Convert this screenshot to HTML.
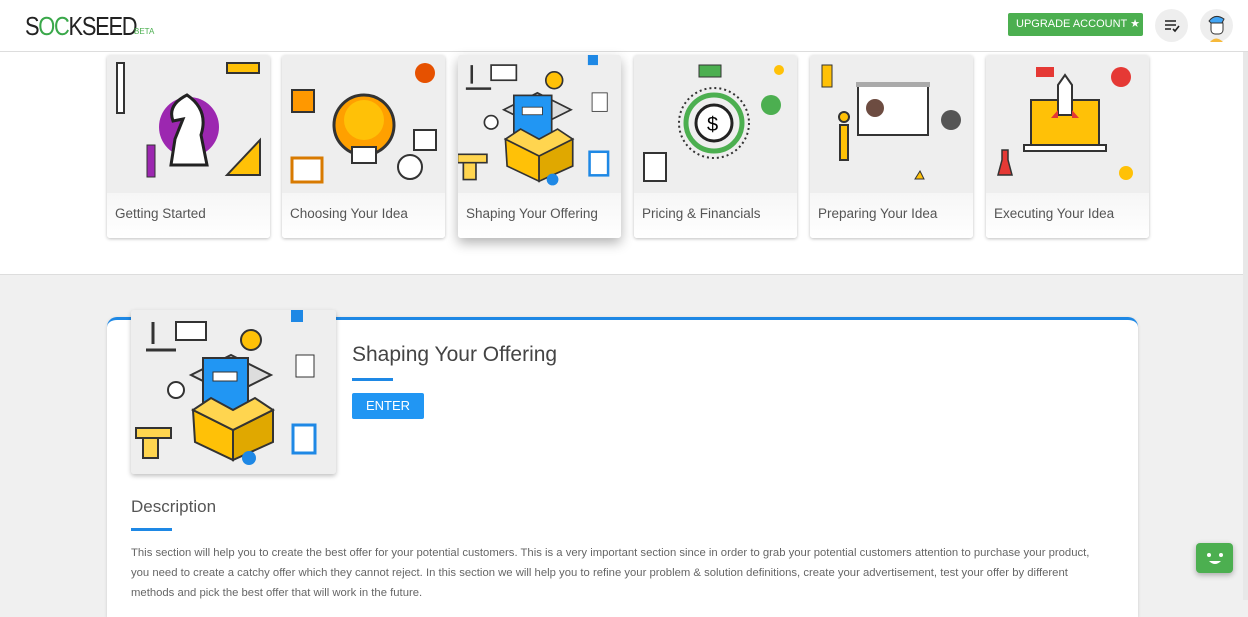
<!DOCTYPE html>
<html><head><meta charset="utf-8"><style>
*{box-sizing:border-box;margin:0;padding:0}
body{width:1248px;height:600px;overflow:hidden;background:#f0f0f0;font-family:"Liberation Sans",sans-serif;position:relative}
.hdr{position:absolute;left:0;top:0;width:1248px;height:52px;background:#fff;border-bottom:1px solid #ddd}
.logo{position:absolute;left:25px;top:11px;font-size:26px;font-weight:normal;color:#222;letter-spacing:-1.5px;transform:scaleX(.84);transform-origin:left;white-space:nowrap}
.logo .o{color:#3aa84a}
.beta{position:absolute;left:134px;top:27px;font-size:8px;color:#4caf50}
.up{position:absolute;left:1008px;top:13px;width:135px;height:23px;background:#4caf50;border-radius:2px;color:#fff;font-size:11px;line-height:23px;padding-left:8px;white-space:nowrap}
.circ{position:absolute;top:9px;width:33px;height:33px;border-radius:50%;background:#eee}
.band{position:absolute;left:0;top:52px;width:1248px;height:223px;background:#fff;border-bottom:1px solid #ddd}
.card{position:absolute;top:55px;width:163px;height:183px;background:#fff;border-radius:3px;box-shadow:0 1px 3px rgba(0,0,0,.25);overflow:hidden}
.card .im{height:138px;background:#eee}
.card .lb{height:45px;line-height:42px;padding-left:8px;font-size:13.5px;color:#555;background:linear-gradient(#f6f6f6,#fff)}
.card.act{box-shadow:0 5px 12px rgba(0,0,0,.3)}
.main{position:absolute;left:107px;top:317px;width:1031px;height:300px;background:#fff;border-top:3px solid #1e88e5;border-radius:10px 10px 0 0;box-shadow:0 1px 3px rgba(0,0,0,.15)}
.bigim{position:absolute;left:131px;top:310px;width:205px;height:164px;background:#eee;border-radius:3px;box-shadow:0 2px 5px rgba(0,0,0,.25);overflow:hidden}
.t1{position:absolute;left:352px;top:343px;font-size:21px;color:#444}
.ul{position:absolute;height:3px;background:#1e88e5}
.btn{position:absolute;left:352px;top:393px;width:72px;height:26px;background:#2196f3;color:#fff;font-size:13px;text-align:center;line-height:26px;border-radius:2px}
.t2{position:absolute;left:131px;top:497px;font-size:17px;color:#555}
.desc{position:absolute;left:131px;top:543px;width:1000px;font-size:11.3px;line-height:20px;color:#666;white-space:nowrap}
.chat{position:absolute;left:1196px;top:543px;width:37px;height:30px;background:#4caf50;border-radius:4px;box-shadow:0 2px 6px rgba(0,0,0,.3)}
.sb{position:absolute;left:1243px;top:52px;width:5px;height:548px;background:#e8e8e8}
</style></head><body>
<div class="hdr">
<div class="logo">S<span class="o">OC</span>KSEED</div><div class="beta">BETA</div>
<div class="up">UPGRADE ACCOUNT ★</div>
<div class="circ" style="left:1155px"><svg width="33" height="33"><path d="M10 12h11M10 16h11M10 20h6M18 20l2 2 4-5" stroke="#222" stroke-width="1.6" fill="none"/></svg></div>
<div class="circ" style="left:1200px"><svg width="33" height="33"><path d="M10 33q6-7 13 0z" fill="#f6b93b"/><rect x="11" y="11" width="12" height="14" rx="4" fill="#fff" stroke="#333"/><path d="M9 12q6-8 15-2l-2 4h-11z" fill="#42a5f5" stroke="#333"/></svg></div>
</div>
<div class="band"></div>

<svg width="0" height="0" style="position:absolute"><defs>
<g id="box"><rect width="205" height="164" fill="#eee"/>
<path d="M60 65l40-20 40 20-40 20z" fill="#ddd" stroke="#333" stroke-width="2"/>
<rect x="72" y="48" width="45" height="55" fill="#2196f3" stroke="#333" stroke-width="2"/><rect x="82" y="62" width="24" height="9" fill="#fff" stroke="#333"/>
<path d="M62 100l40 20v30l-38-18z" fill="#ffc107" stroke="#333" stroke-width="2"/><path d="M102 120l40-20v32l-40 18z" fill="#e0a800" stroke="#333" stroke-width="2"/>
<path d="M62 100l40 20 40-20-18-12-22 12-22-12z" fill="#ffd54f" stroke="#333" stroke-width="2"/>
<circle cx="120" cy="30" r="10" fill="#ffc107" stroke="#333" stroke-width="2"/>
<rect x="45" y="12" width="30" height="18" fill="#fff" stroke="#333" stroke-width="2"/>
<circle cx="45" cy="80" r="8" fill="#fff" stroke="#333" stroke-width="2"/>
<rect x="162" y="115" width="22" height="28" fill="#fff" stroke="#1e88e5" stroke-width="3"/>
<circle cx="118" cy="148" r="7" fill="#1e88e5"/>
<rect x="160" y="0" width="12" height="12" fill="#1e88e5"/><rect x="165" y="45" width="18" height="22" fill="#fff" stroke="#333"/>
<path d="M22 12v22M15 40h30" stroke="#333" stroke-width="3"/><path d="M5 118h35v10h-35zM12 128v20h15v-20" fill="#ffd54f" stroke="#333" stroke-width="2"/>
</g></defs></svg>

<div class="card" style="left:107px"><div class="im"><svg width="163" height="138"><circle cx="82" cy="72" r="30" fill="#9c27b0"/><path d="M64 110h36l-6-30q8-25-14-40-20 10-14 26l10-2-8 20z" fill="#fff" stroke="#222" stroke-width="3"/><path d="M120 120h33v-35z" fill="#ffc107" stroke="#333" stroke-width="2"/><rect x="10" y="8" width="7" height="50" fill="#fff" stroke="#333" stroke-width="2"/><rect x="120" y="8" width="32" height="10" fill="#ffc107" stroke="#333" stroke-width="2"/><rect x="40" y="90" width="8" height="32" fill="#9c27b0" stroke="#333"/></svg></div><div class="lb">Getting Started</div></div>
<div class="card" style="left:282px"><div class="im"><svg width="163" height="138"><circle cx="82" cy="70" r="30" fill="#ffa000" stroke="#333" stroke-width="3"/><circle cx="82" cy="65" r="20" fill="#ffc107"/><rect x="70" y="92" width="24" height="16" fill="#fff" stroke="#333" stroke-width="2"/><rect x="10" y="35" width="22" height="22" fill="#ff9800" stroke="#333" stroke-width="2"/><rect x="10" y="103" width="30" height="24" fill="#fff" stroke="#d87a00" stroke-width="3"/><circle cx="128" cy="112" r="12" fill="#fff" stroke="#333" stroke-width="2"/><rect x="132" y="75" width="22" height="20" fill="#fff" stroke="#333" stroke-width="2"/><circle cx="143" cy="18" r="10" fill="#e65100"/></svg></div><div class="lb">Choosing Your Idea</div></div>
<div class="card act" style="left:458px"><div class="im"><svg width="163" height="138" viewBox="0 0 205 164" preserveAspectRatio="xMidYMid slice"><use href="#box"/></svg></div><div class="lb">Shaping Your Offering</div></div>
<div class="card" style="left:634px"><div class="im"><svg width="163" height="138"><circle cx="80" cy="68" r="35" fill="none" stroke="#333" stroke-width="2" stroke-dasharray="2 3"/><circle cx="80" cy="68" r="28" fill="none" stroke="#4caf50" stroke-width="5"/><circle cx="80" cy="68" r="18" fill="#fff" stroke="#222" stroke-width="3"/><text x="73" y="76" font-size="20" font-family="Liberation Sans">$</text><rect x="10" y="98" width="22" height="28" fill="#fff" stroke="#333" stroke-width="2"/><rect x="65" y="10" width="22" height="12" fill="#4caf50" stroke="#333"/><circle cx="137" cy="50" r="10" fill="#4caf50"/><circle cx="145" cy="15" r="5" fill="#ffc107"/></svg></div><div class="lb">Pricing &amp; Financials</div></div>
<div class="card" style="left:810px"><div class="im"><svg width="163" height="138"><rect x="48" y="30" width="70" height="50" fill="#fff" stroke="#333" stroke-width="2"/><rect x="46" y="27" width="74" height="5" fill="#aaa"/><circle cx="65" cy="53" r="9" fill="#6d4c41"/><path d="M30 70h8v35h-8z" fill="#ffc107" stroke="#333" stroke-width="2"/><circle cx="34" cy="62" r="5" fill="#ffc107" stroke="#333" stroke-width="2"/><circle cx="141" cy="65" r="10" fill="#555"/><rect x="12" y="10" width="10" height="22" fill="#ffc107" stroke="#333"/><path d="M110 116l4 8h-9z" fill="#ffc107" stroke="#333"/></svg></div><div class="lb">Preparing Your Idea</div></div>
<div class="card" style="left:986px"><div class="im"><svg width="163" height="138"><rect x="45" y="45" width="68" height="45" fill="#ffc107" stroke="#333" stroke-width="2"/><rect x="38" y="90" width="82" height="6" fill="#fff" stroke="#333" stroke-width="2"/><path d="M72 60v-30l7-10 7 10v30z" fill="#fff" stroke="#333" stroke-width="2"/><path d="M72 55l-7 8h7zM86 55l7 8h-7z" fill="#e53935"/><path d="M12 120h14l-4-15v-10h-6v10z" fill="#e53935" stroke="#333" stroke-width="1.5"/><circle cx="135" cy="22" r="10" fill="#e53935"/><rect x="50" y="12" width="18" height="10" fill="#e53935"/><circle cx="140" cy="118" r="7" fill="#ffc107"/></svg></div><div class="lb">Executing Your Idea</div></div>

<div class="main"></div>
<div class="bigim"><svg width="205" height="164"><use href="#box"/></svg></div>
<div class="t1">Shaping Your Offering</div>
<div class="ul" style="left:352px;top:378px;width:41px"></div>
<div class="btn">ENTER</div>
<div class="t2">Description</div>
<div class="ul" style="left:131px;top:528px;width:41px"></div>
<div class="desc">This section will help you to create the best offer for your potential customers. This is a very important section since in order to grab your potential customers attention to purchase your product,<br>you need to create a catchy offer which they cannot reject. In this section we will help you to refine your problem &amp; solution definitions, create your advertisement, test your offer by different<br>methods and pick the best offer that will work in the future.</div>
<div class="sb"></div>
<div class="chat"><svg width="37" height="30"><circle cx="13" cy="12" r="2" fill="#fff"/><circle cx="25" cy="12" r="2" fill="#fff"/><path d="M13 18q6 6 12 0z" fill="#fff"/></svg></div>
</body></html>
